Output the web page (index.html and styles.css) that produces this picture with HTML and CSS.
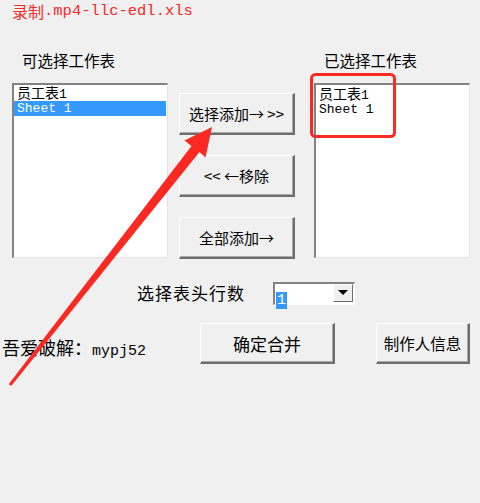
FILE: index.html
```html
<!DOCTYPE html>
<html>
<head>
    <meta charset="utf-8">
    <title>合并工作表</title>
    <link rel="stylesheet" href="styles.css">
</head>
<body>
<div class="page">
    <div class="title"><span class="cjk">录制</span><span>.mp4-llc-edl.xls</span></div>

    <div class="main">
        <div class="col">
            <div class="label">可选择工作表</div>
            <div class="listbox">
                <div class="item"><span class="cjk">员工表</span>1</div>
                <div class="item selected">Sheet 1</div>
            </div>
        </div>
        <div class="actions">
            <button class="btn">选择添加→ &gt;&gt;</button>
            <button class="btn">&lt;&lt; ←移除</button>
            <button class="btn">全部添加→</button>
        </div>
        <div class="col right">
            <div class="label">已选择工作表</div>
            <div class="listbox">
                <div class="item"><span class="cjk">员工表</span>1</div>
                <div class="item">Sheet 1</div>
            </div>
        </div>
    </div>

    <div class="header-row">
        <span class="rows-label">选择表头行数</span>
        <div class="combo">
            <div class="combo-field"><span class="combo-sel">1</span></div>
            <div class="combo-drop"><span class="tri"></span></div>
        </div>
    </div>

    <div class="footer">
        <span class="credit"><span class="cjk">吾爱破解：</span>mypj52</span>
        <button class="btn wide">确定合并</button>
        <button class="btn info">制作人信息</button>
    </div>

    <!-- annotation layer: red box + arrow drawn over the dialog -->
    <svg class="marks" width="480" height="503" viewBox="0 0 480 503">
        <rect x="311.5" y="74.5" width="83" height="62" rx="4" fill="none" stroke="#fa2a22" stroke-width="3"/>
        <polygon fill="#fa2a22" points="8.6,384.3 11.4,385.7 199.5,152 205.5,157.5 212,127 184.5,140.5 191.5,146"/>
    </svg>
</div>
</body>
</html>
```

FILE: styles.css
```css
body{
    margin:0;
    background:#f0f0f0;
    color:#000;
    font-family:"Noto Sans CJK SC", "Liberation Sans", sans-serif;
}
.page{
    position:relative;
    width:480px;
    height:503px;
    overflow:hidden;
}
.title{
    display:flex;
    align-items:center;
    height:22px;
    padding-left:12px;
    font-family:"Liberation Mono", "Noto Sans CJK SC", monospace;
    font-size:15.5px;
    line-height:18px;
    color:#f52a2a;
}
.title .cjk{
    font-family:"Noto Sans CJK SC", sans-serif;
    font-size:16px;
}
.main{
    display:flex;
    margin-top:28px;
    padding-left:12px;
}
.col{
    width:156px;
}
.label{
    font-size:15.5px;
    line-height:20px;
    padding-left:10px;
    height:33px;
}
.listbox{
    box-sizing:border-box;
    height:175px;
    background:#fff;
    border-style:solid;
    border-width:2px 1px 1px 2px;
    border-color:#828282 #e3e3e3 #e3e3e3 #828282;
    padding:0 1px 0 0;
}
.item{
    font-family:"Liberation Mono", "Noto Sans CJK SC", monospace;
    font-size:13px;
    line-height:15.5px;
    height:15.5px;
    padding-left:3px;
}
.item .cjk{
    font-family:"Noto Sans CJK SC", sans-serif;
    font-size:14px;
}
.item.selected{
    background:#3399ff;
    color:#fff;
}
.right .listbox{
    padding-top:1px;
}
.actions{
    display:flex;
    flex-direction:column;
    gap:20px;
    width:116px;
    margin:43px 19px 0 11px;
}
.btn{
    box-sizing:border-box;
    height:42px;
    padding:0;
    background:#f0f0f0;
    font-family:"Noto Sans CJK SC", "Liberation Sans", sans-serif;
    font-size:15px;
    color:#000;
    border-style:solid;
    border-width:1px 2px 2px 1px;
    border-color:#fff #6e6e6e #6e6e6e #fff;
    box-shadow:inset -1px -1px 0 #a8a8a8;
}
.header-row{
    display:flex;
    align-items:center;
    margin-top:22px;
    padding-left:137px;
    height:24px;
}
.rows-label{
    font-size:17px;
    letter-spacing:1px;
    line-height:20px;
    margin-right:28px;
}
.combo{
    display:flex;
    box-sizing:border-box;
    width:82px;
    height:23px;
    background:#fff;
    border-style:solid;
    border-width:2px 1px 1px 2px;
    border-color:#828282 #fff #fff #828282;
}
.combo-field{
    flex:1;
    padding:1px 0 0 1px;
}
.combo-sel{
    display:inline-block;
    background:#3399ff;
    color:#fff;
    font-family:"Liberation Mono", monospace;
    font-size:15px;
    line-height:17px;
    padding:0 1px;
}
.combo-drop{
    box-sizing:border-box;
    width:20px;
    height:18px;
    margin:0 1px 0 0;
    background:#f0f0f0;
    border-style:solid;
    border-width:1px;
    border-color:#fff #6e6e6e #6e6e6e #fff;
    display:flex;
    align-items:center;
    justify-content:center;
}
.tri{
    width:0;
    height:0;
    border-left:5px solid transparent;
    border-right:5px solid transparent;
    border-top:5px solid #000;
}
.footer{
    display:flex;
    margin-top:18px;
    height:41px;
}
.credit{
    align-self:flex-end;
    width:198px;
    padding-left:2px;
    margin-bottom:2px;
    font-family:"Liberation Mono", "Noto Sans CJK SC", monospace;
    font-size:15px;
    line-height:20px;
}
.credit .cjk{
    font-family:"Noto Sans CJK SC", sans-serif;
    font-size:18px;
}
.btn.wide{
    width:135px;
    height:41px;
    margin-right:41px;
    font-size:17px;
}
.btn.info{
    width:94px;
    height:41px;
    font-size:15.5px;
}
.marks{
    position:absolute;
    left:0;
    top:0;
    pointer-events:none;
}
```
